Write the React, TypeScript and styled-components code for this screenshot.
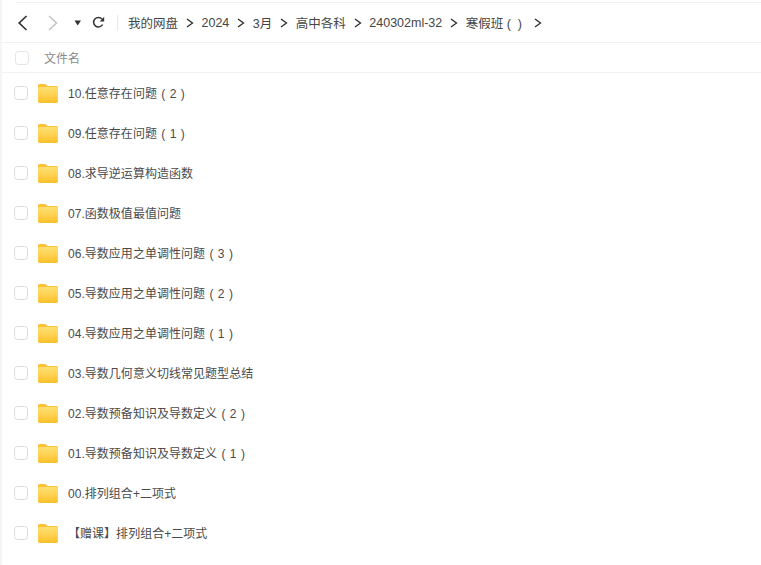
import React from 'react';
import styled, { createGlobalStyle } from 'styled-components';

const GlobalStyle = createGlobalStyle`
  html, body {
    margin: 0;
    padding: 0;
    background: #fff;
    overflow: hidden;
  }
  body {
    font-family: "Liberation Sans", "Noto Sans CJK SC", sans-serif;
  }
`;

const Page = styled.div`
  width: 761px;
  height: 565px;
  box-sizing: border-box;
  padding-top: 2px;
  border-left: 2px solid #f5f5f6;
  overflow: hidden;
`;

const TopRule = styled.div`
  height: 1px;
  margin-left: 14px;
  background: #f0f0f1;
`;

const TopBar = styled.div`
  height: 39px;
  border-bottom: 1px solid #f0f0f1;
  display: flex;
  align-items: center;
  padding-left: 14px;
`;

const NavButton = styled.span<{ $width: number }>`
  width: ${p => p.$width}px;
  height: 20px;
  display: flex;
  align-items: center;
  flex-shrink: 0;
`;

const Divider = styled.span`
  width: 1px;
  height: 16px;
  background: #e8e8e8;
  margin: 0 10px 0 7px;
`;

const Crumbs = styled.nav`
  display: flex;
  align-items: center;
  font-size: 12.5px;
  color: #454545;
  white-space: pre;

  span:last-of-type {
    padding-right: 4px;
  }
`;

const CrumbArrow = styled.svg`
  width: 8px;
  height: 10px;
  margin: 0 7.5px 0 8px;
  flex-shrink: 0;
`;

const HeaderRow = styled.div`
  height: 29px;
  border-bottom: 1px solid #f0f0f1;
  display: flex;
  align-items: center;
  padding-left: 13px;
  font-size: 12px;
  color: #8a8a8a;
`;

const Check = styled.span<{ $head?: boolean }>`
  width: 12px;
  height: 12px;
  border: 1px solid ${p => (p.$head ? '#e4e4e4' : '#dcdcdc')};
  border-radius: 3.5px;
  background: #fff;
  flex-shrink: 0;
`;

const HeaderLabel = styled.span`
  margin-left: 15px;
`;

const Row = styled.div`
  height: 40px;
  display: flex;
  align-items: center;
  padding-left: 12px;
  font-size: 12px;
  color: #4a4a4a;
  white-space: pre;
`;

const FolderIcon = styled.svg`
  width: 20px;
  height: 19px;
  margin: 0 10px;
  flex-shrink: 0;
`;

const FileName = styled.span`
  margin-bottom: 2px;
  letter-spacing: 0.03px;
  word-spacing: 1px;
`;

const files = [
  '10.任意存在问题 ( 2 )',
  '09.任意存在问题 ( 1 )',
  '08.求导逆运算构造函数',
  '07.函数极值最值问题',
  '06.导数应用之单调性问题 ( 3 )',
  '05.导数应用之单调性问题 ( 2 )',
  '04.导数应用之单调性问题 ( 1 )',
  '03.导数几何意义切线常见题型总结',
  '02.导数预备知识及导数定义 ( 2 )',
  '01.导数预备知识及导数定义 ( 1 )',
  '00.排列组合+二项式',
  '【赠课】排列组合+二项式',
];

const crumbs = ['我的网盘', '2024', '3月', '高中各科', '240302ml-32', '寒假班 (  )'];

const Arrow = () => (
  <CrumbArrow viewBox="0 0 8 10">
    <path d="M1 1l5.5 4L1 9" fill="none" stroke="#2b2b2b" strokeWidth="1.3" />
  </CrumbArrow>
);

const Folder = () => (
  <FolderIcon viewBox="0 0 20 19">
    <defs>
      <linearGradient id="folderFill" x1="0" y1="0" x2="0" y2="1">
        <stop offset="0" stopColor="#ffe075" />
        <stop offset="1" stopColor="#fcc02a" />
      </linearGradient>
    </defs>
    <path d="M1.5 0h6l2 2H18.5A1.5 1.5 0 0 1 20 3.5V8H0V1.5A1.5 1.5 0 0 1 1.5 0z" fill="#fbc23a" />
    <rect x="0" y="3" width="20" height="16" rx="1.8" fill="url(#folderFill)" />
  </FolderIcon>
);

export default function App() {
  return (
    <>
      <GlobalStyle />
      <Page>
        <TopRule />
        <TopBar>
          <NavButton $width={31}>
            <svg width="12" height="16" viewBox="0 0 12 16">
              <path d="M10.5 1L3.2 8l7.3 7" fill="none" stroke="#333" strokeWidth="1.7" />
            </svg>
          </NavButton>
          <NavButton $width={27}>
            <svg width="12" height="16" viewBox="0 0 12 16">
              <path d="M2 1l7.5 7L2 15" fill="none" stroke="#c2c2c2" strokeWidth="1.5" />
            </svg>
          </NavButton>
          <NavButton $width={18}>
            <svg width="8" height="6" viewBox="0 0 8 6">
              <path d="M0.5 0.5h6.5L3.7 5.5z" fill="#333" />
            </svg>
          </NavButton>
          <NavButton $width={18}>
            <svg width="13" height="13" viewBox="0 0 13 13">
              <path d="M10.6 8.5A4.8 4.8 0 1 1 10 3" fill="none" stroke="#333" strokeWidth="1.5" />
              <path d="M12.2 0.8v4.6H7.7z" fill="#333" />
            </svg>
          </NavButton>
          <Divider />
          <Crumbs>
            {crumbs.map(c => (
              <React.Fragment key={c}>
                <span>{c}</span>
                <Arrow />
              </React.Fragment>
            ))}
          </Crumbs>
        </TopBar>
        <HeaderRow>
          <Check $head />
          <HeaderLabel>文件名</HeaderLabel>
        </HeaderRow>
        {files.map(name => (
          <Row key={name}>
            <Check />
            <Folder />
            <FileName>{name}</FileName>
          </Row>
        ))}
      </Page>
    </>
  );
}
